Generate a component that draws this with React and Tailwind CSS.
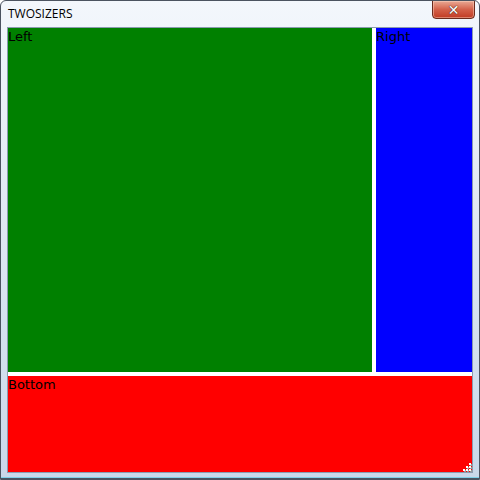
export default function App() {
  const dots = [
    [469, 463],
    [466, 466], [469, 466],
    [463, 469], [466, 469], [469, 469],
  ];
  return (
    <div className="w-[480px] h-[480px] relative overflow-hidden rounded-t-[6px] border border-[#4b5360] bg-gradient-to-b from-[#f3f7fc] via-[#dde7f3] to-[#c9d8ea] flex flex-col"
      style={{ fontFamily: '"DejaVu Sans", sans-serif' }}>
      <div className="h-[26px] shrink-0 flex items-start pl-[7px] pt-[5px]">
        <span className="text-[12px] leading-[16px] text-black" style={{ fontFamily: '"Open Sans", "Noto Sans", sans-serif' }}>TWOSIZERS</span>
      </div>
      <div className="absolute left-[431px] top-[-1px] w-[43px] h-[19px] rounded-b-[4px] border border-[#6b2a1c] bg-gradient-to-b from-[#e9a894] via-[#d4614a] to-[#c03a22] flex items-center justify-center shadow-[inset_0_0_0_1px_rgba(255,220,200,0.45)]">
        <span className="text-white font-bold text-[14px] leading-none" style={{ fontFamily: '"DejaVu Sans", sans-serif', textShadow: '0 0 1px #3a1a10, 0 0 1px #3a1a10' }}>✕</span>
      </div>
      <div className="ml-[6px] w-[466px] h-[446px] border border-[#8b9bb0] bg-white flex flex-col gap-[4px]">
        <div className="h-[344px] flex gap-[4px]">
          <div className="w-[364px] bg-[#008000] text-[13px] leading-[15px] text-black pt-[1px]">Left</div>
          <div className="flex-1 bg-[#0000ff] text-[13px] leading-[15px] text-black pt-[1px]">Right</div>
        </div>
        <div className="flex-1 bg-[#ff0000] text-[13px] leading-[15px] text-black pt-[1px]">Bottom</div>
      </div>
      <div className="absolute left-0 right-0 bottom-0 h-[2px] bg-[#7fd0e8] border-b border-[#4b5360]" />
      {dots.map(([x, y], i) => (
        <div key={i} className="absolute w-[2px] h-[2px] bg-white shadow-[1px_1px_0_#9a9a9a]" style={{ left: x - 1, top: y - 1 }} />
      ))}
    </div>
  );
}
